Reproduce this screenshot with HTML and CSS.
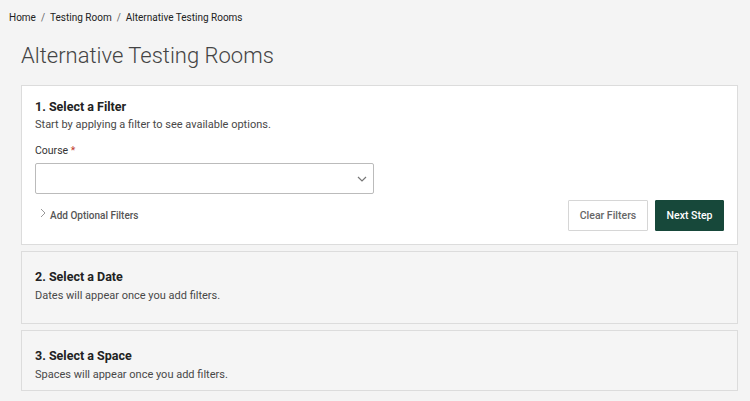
FILE: index.html
```html
<!DOCTYPE html>
<html lang="en">
<head>
    <meta charset="UTF-8">
    <title>Alternative Testing Rooms</title>
    <link rel="stylesheet" href="styles.css">
</head>
<body>
    <div class="crumbs">
        <a href="#">Home</a><span class="sep">/</span><a href="#">Testing Room</a><span class="sep">/</span><span>Alternative Testing Rooms</span>
    </div>

    <div class="page">
        <h1 class="title">Alternative Testing Rooms</h1>

        <!-- step 1 -->
        <div class="step active">
            <h2>1. Select a Filter</h2>
            <p>Start by applying a filter to see available options.</p>
            <label class="field-label">Course <span class="req">*</span></label>
            <div class="select">
                <svg width="12" height="8" viewBox="0 0 12 8"><path d="M2 2 L6 6 L10 2" fill="none" stroke="#777" stroke-width="1.2"/></svg>
            </div>
            <div class="actions">
                <a href="#" class="optional">
                    <svg width="6" height="10" viewBox="0 0 6 10"><path d="M1 1 L5 5 L1 9" fill="none" stroke="#999" stroke-width="1"/></svg>
                    Add Optional Filters
                </a>
                <div class="buttons">
                    <button class="btn btn-clear">Clear Filters</button>
                    <button class="btn btn-next">Next Step</button>
                </div>
            </div>
        </div>

        <!-- step 2 -->
        <div class="step step-date">
            <h2>2. Select a Date</h2>
            <p>Dates will appear once you add filters.</p>
        </div>

        <!-- step 3 -->
        <div class="step step-space">
            <h2>3. Select a Space</h2>
            <p>Spaces will appear once you add filters.</p>
        </div>
    </div>
</body>
</html>
```

FILE: styles.css
```css
* {margin: 0;padding: 0;box-sizing: border-box;}

body{
    background-color: #f4f4f4;
    font-family: Roboto, "Liberation Sans", Arial, sans-serif;
    color: #333;
}

.crumbs{
    padding: 12px 9px 0;
    height: 25px;
    font-size: 10px;
    color: #222;
}
.crumbs a{
    color: #222;
    text-decoration: none;
}
.crumbs .sep{
    margin: 0 5px;
    color: #666;
}

.page{
    padding: 0 12px 0 21px;
}
.title{
    font-size: 22px;
    font-weight: 300;
    color: #444;
    line-height: 28px;
    margin: 17px 0 15px;
}

.step{
    border: 1px solid #dcdcdc;
    background-color: #f5f5f5;
    padding: 17px 13px 0;
    margin-bottom: 6px;
}
.step.active{
    background-color: #fff;
    height: 160px;
    padding-top: 13px;
}
.step-date{
    height: 73px;
}
.step-space{
    height: 61px;
}
.step h2{
    font-size: 12.5px;
    font-weight: 700;
    color: #222;
    line-height: 16px;
}
.step p{
    font-size: 11px;
    color: #484848;
    line-height: 14px;
    margin-top: 4px;
}
.step.active p{
    margin-top: 3px;
}

.field-label{
    display: block;
    font-size: 10.5px;
    color: #333;
    margin-top: 12px;
    line-height: 14px;
}
.req{
    color: #c0392b;
}
.select{
    width: 339px;
    height: 31px;
    margin-top: 5px;
    border: 1px solid #bbb;
    border-radius: 2px;
    background-color: #fff;
    display: flex;
    align-items: center;
    justify-content: flex-end;
    padding-right: 5px;
}

.actions{
    display: flex;
    justify-content: space-between;
    align-items: center;
    margin-top: 6px;
}
.optional{
    display: flex;
    align-items: center;
    gap: 4px;
    font-size: 10px;
    font-weight: 500;
    color: #555;
    text-decoration: none;
    padding-left: 5px;
}
.optional svg{
    margin-top: -6px;
}
.buttons{
    display: flex;
    gap: 7px;
}
.btn{
    height: 31px;
    font-family: Roboto, "Liberation Sans", Arial, sans-serif;
    font-size: 10.5px;
    font-weight: 500;
    border-radius: 1px;
    cursor: pointer;
}
.btn-clear{
    width: 80px;
    background-color: #fff;
    border: 1px solid #d6d6d6;
    color: #666;
}
.btn-next{
    width: 69px;
    background-color: #17483a;
    border: 1px solid #17483a;
    color: #fff;
}
```
